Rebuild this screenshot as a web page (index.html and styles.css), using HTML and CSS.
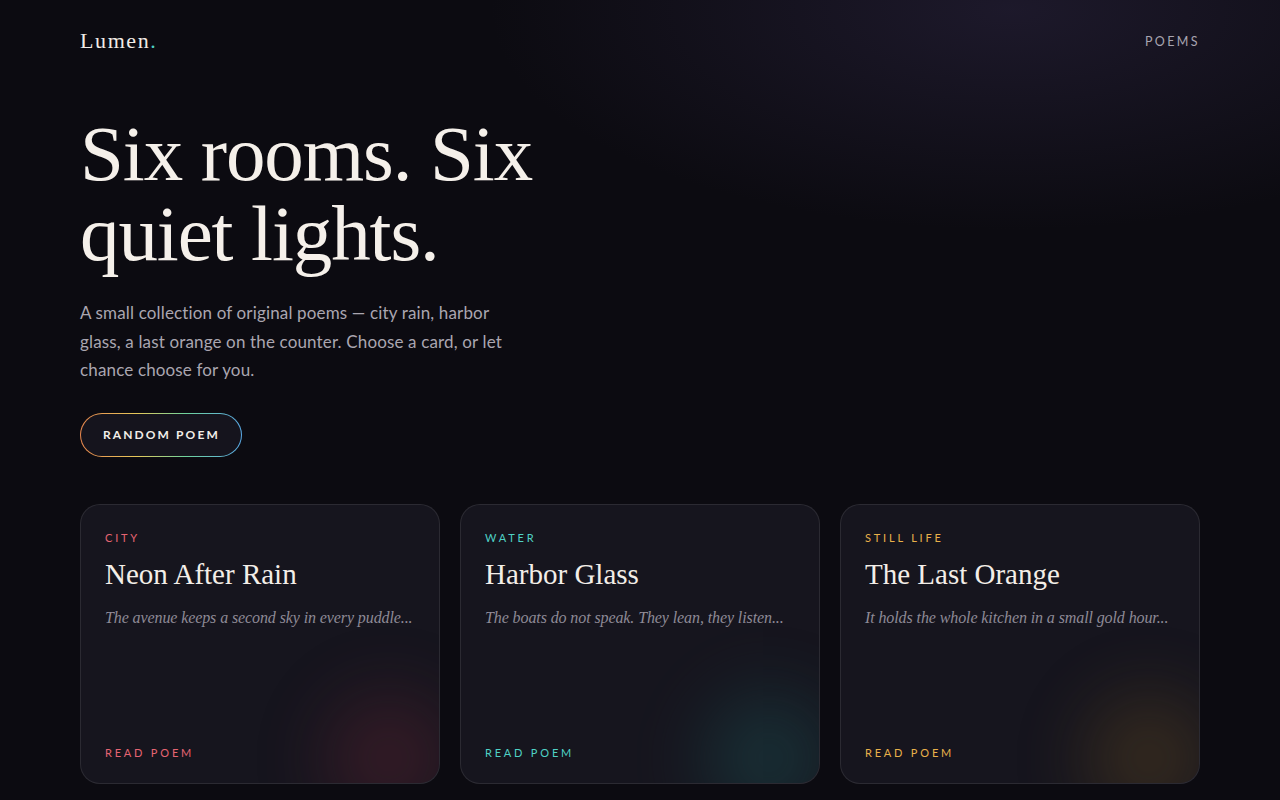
FILE: index.html
```html
<!DOCTYPE html>
<html lang="en">
  <head>
    <meta charset="UTF-8" />
    <meta name="viewport" content="width=device-width, initial-scale=1.0" />
    <title>Lumen.</title>
    <link rel="stylesheet" href="styles.css">
  </head>
  <body>
    <div class="page">
      <header class="top">
        <a class="logo" href="javascript:;">Lumen<span>.</span></a>
        <a class="nav-link" href="javascript:;">POEMS</a>
      </header>

      <section class="hero">
        <h1>Six rooms. Six quiet lights.</h1>
        <p class="lead">
          A small collection of original poems — city rain, harbor glass, a last orange on the counter. Choose a card, or let chance choose for you.
        </p>
        <a class="btn-random" href="javascript:;"><span>RANDOM POEM</span></a>
      </section>

      <!-- 诗歌卡片 -->
      <ul class="cards">
        <li class="card city">
          <span class="tag">CITY</span>
          <h2>Neon After Rain</h2>
          <p class="excerpt">The avenue keeps a second sky in every puddle...</p>
          <a class="read" href="javascript:;">READ POEM</a>
        </li>
        <li class="card water">
          <span class="tag">WATER</span>
          <h2>Harbor Glass</h2>
          <p class="excerpt">The boats do not speak. They lean, they listen...</p>
          <a class="read" href="javascript:;">READ POEM</a>
        </li>
        <li class="card still">
          <span class="tag">STILL LIFE</span>
          <h2>The Last Orange</h2>
          <p class="excerpt">It holds the whole kitchen in a small gold hour...</p>
          <a class="read" href="javascript:;">READ POEM</a>
        </li>
      </ul>
    </div>
  </body>
</html>
```

FILE: styles.css
```css
* {
  margin: 0;
  padding: 0;
  box-sizing: border-box;
}

ul {
  list-style: none;
}

a {
  text-decoration: none;
  color: inherit;
}

html,
body {
  height: 100%;
  overflow: hidden;
}

body {
  background-color: #0c0b11;
  background-image: radial-gradient(ellipse 520px 220px at 1010px 10px, rgba(60, 50, 90, 0.35), rgba(12, 11, 17, 0) 100%);
  color: #f4efe9;
  font-family: "Lato", "Noto Sans", sans-serif;
}

.page {
  width: 1120px;
  margin: 0 auto;
}

.top {
  display: flex;
  justify-content: space-between;
  align-items: center;
  height: 84px;
  padding-bottom: 2px;
}

.logo {
  font-family: "Liberation Serif", "DejaVu Serif", serif;
  font-size: 22px;
  letter-spacing: 1.6px;
  color: #f1ece6;
}

.logo span {
  color: #4fd1c5;
}

.nav-link {
  font-size: 12.5px;
  letter-spacing: 2.4px;
  color: #a8a4b0;
}

.hero {
  padding-top: 30px;
}

.hero h1 {
  font-family: "Liberation Serif", "DejaVu Serif", serif;
  font-weight: 400;
  font-size: 79px;
  line-height: 80px;
  letter-spacing: -1.1px;
  max-width: 500px;
  color: #f5f0ea;
}

.lead {
  margin-top: 25px;
  max-width: 425px;
  font-size: 17px;
  letter-spacing: 0.15px;
  line-height: 28.5px;
  color: #aaa6b0;
}

.btn-random {
  display: inline-block;
  margin-top: 28px;
  padding: 1px;
  border-radius: 22px;
  background: linear-gradient(90deg, #e8874e, #e6c85a 35%, #6fd39c 65%, #5aa9e6);
}

.btn-random span {
  display: block;
  height: 42px;
  line-height: 42px;
  padding: 0 21px 0 22px;
  border-radius: 21px;
  background-color: #15141d;
  font-size: 12px;
  font-weight: 700;
  letter-spacing: 2.1px;
  color: #f2eee8;
}

.cards {
  display: grid;
  grid-template-columns: repeat(3, 1fr);
  gap: 20px;
  margin-top: 47px;
}

.card {
  position: relative;
  display: flex;
  flex-direction: column;
  height: 280px;
  padding: 26px 24px 24px;
  border: 1px solid rgba(255, 255, 255, 0.09);
  border-radius: 20px;
  background-color: #16151e;
  overflow: hidden;
}

.card::after {
  content: "";
  position: absolute;
  right: -50px;
  bottom: -70px;
  width: 200px;
  height: 190px;
  border-radius: 50%;
  filter: blur(30px);
  opacity: 0.4;
}

.city::after {
  background: radial-gradient(circle, #7a2a3a 0%, rgba(122, 42, 58, 0) 70%);
}

.water::after {
  background: radial-gradient(circle, #1f6a6a 0%, rgba(31, 106, 106, 0) 70%);
}

.still::after {
  background: radial-gradient(circle, #7a5a22 0%, rgba(122, 90, 34, 0) 70%);
}

.tag,
.read {
  font-size: 11px;
  font-weight: 400;
  letter-spacing: 2.8px;
}

.card h2 {
  margin-top: 12px;
  font-family: "Liberation Serif", "DejaVu Serif", serif;
  font-weight: 400;
  font-size: 29px;
  line-height: 36px;
  color: #f3eee8;
}

.excerpt {
  margin-top: 17px;
  font-family: "Liberation Serif", "DejaVu Serif", serif;
  font-style: italic;
  font-size: 16px;
  letter-spacing: -0.1px;
  color: #8e8a96;
  white-space: nowrap;
}

.read {
  margin-top: auto;
  position: relative;
  z-index: 1;
}

.city .tag,
.city .read {
  color: #e56472;
}

.water .tag,
.water .read {
  color: #4fd1c5;
}

.still .tag,
.still .read {
  color: #e8b04a;
}
```
